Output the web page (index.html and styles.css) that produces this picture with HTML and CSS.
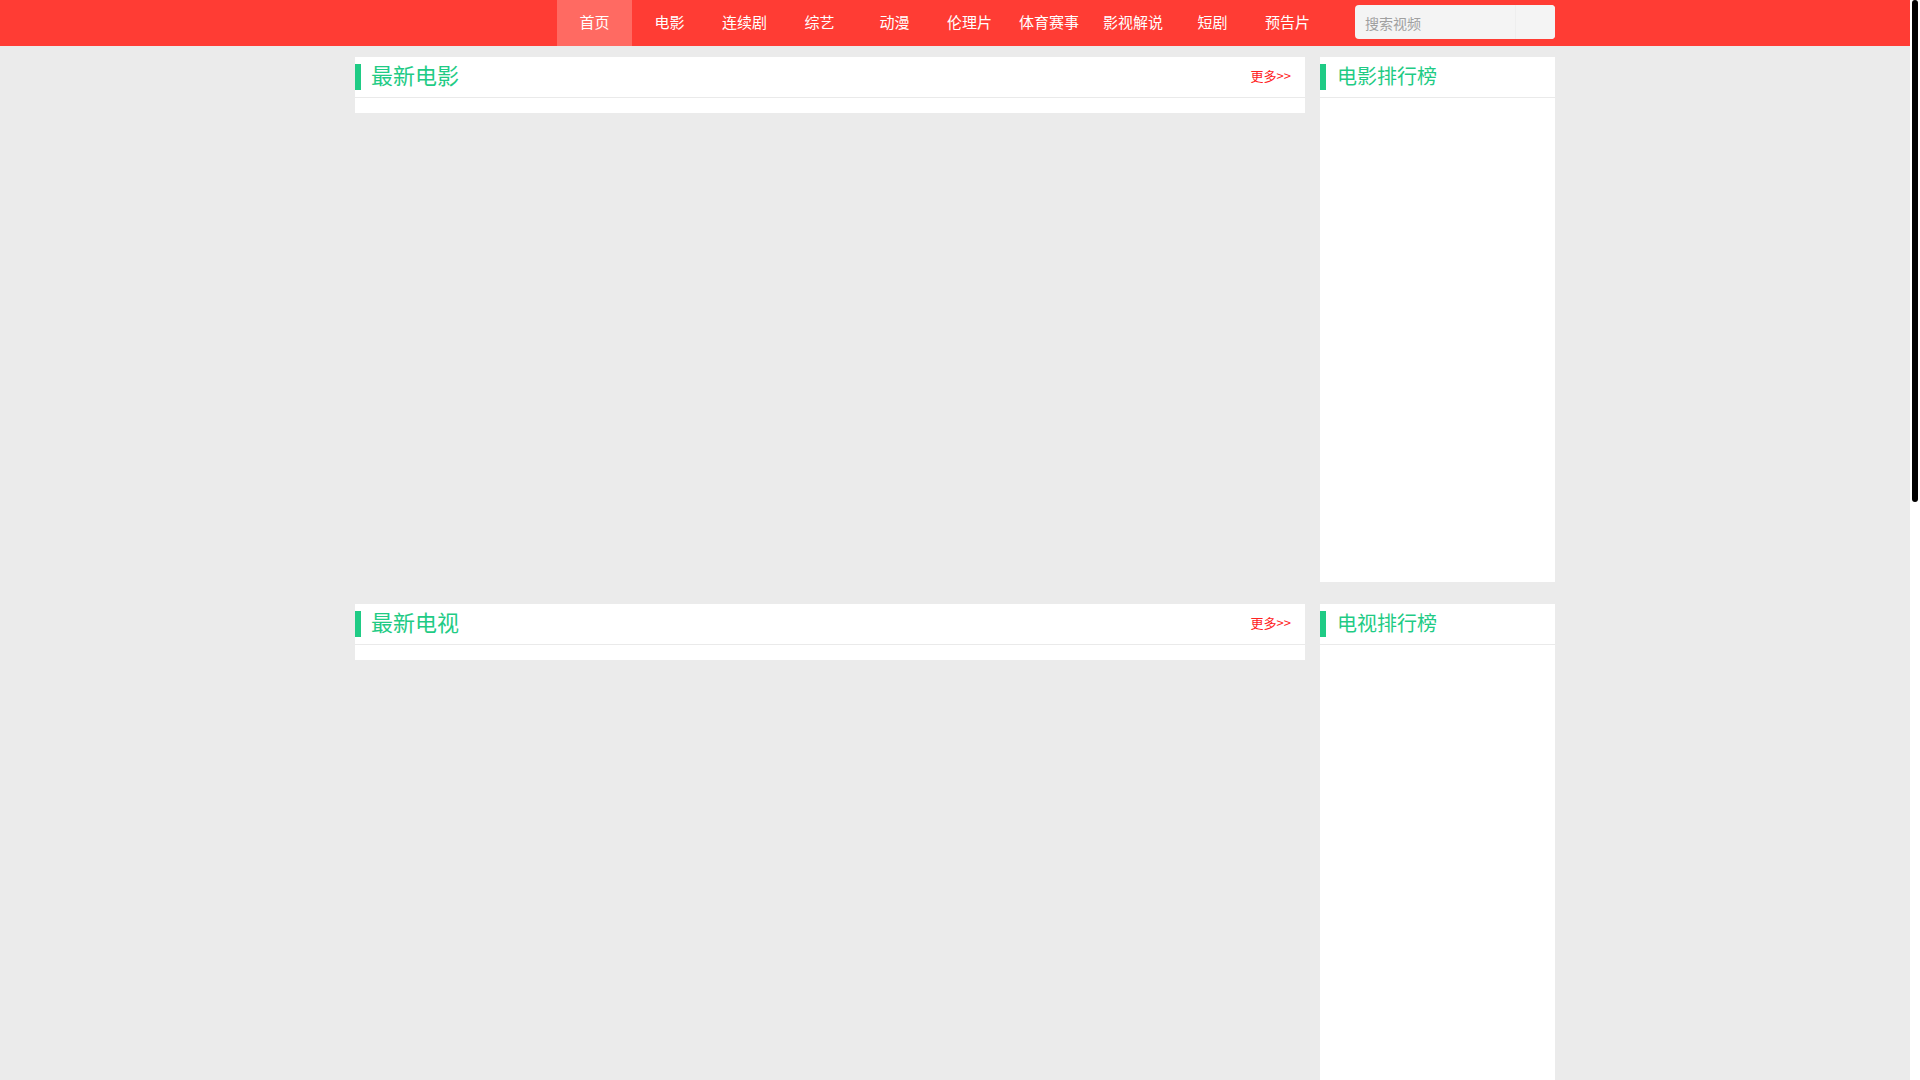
FILE: index.html
```html
<!DOCTYPE html>
<html lang="zh-CN">
<head>
<meta charset="utf-8">
<title>首页</title>
<link rel="stylesheet" href="styles.css">
</head>
<body>
<div class="page">
<header class="topbar">
  <div class="wrap topbar-inner">
    <div class="logo"></div>
    <ul class="nav">
      <li class="nav-item active">首页</li>
      <li class="nav-item">电影</li>
      <li class="nav-item">连续剧</li>
      <li class="nav-item">综艺</li>
      <li class="nav-item">动漫</li>
      <li class="nav-item">伦理片</li>
      <li class="nav-item">体育赛事</li>
      <li class="nav-item">影视解说</li>
      <li class="nav-item">短剧</li>
      <li class="nav-item">预告片</li>
    </ul>
    <form class="search">
      <input class="search-input" type="text" placeholder="搜索视频">
      <button class="search-btn" type="button"></button>
    </form>
  </div>
</header>

<main class="wrap content">
  <section class="row">
    <div class="main-box">
      <div class="box-head">
        <h2 class="box-title big">最新电影</h2>
        <a class="more">更多&gt;&gt;</a>
      </div>
      <div class="box-body"></div>
    </div>
    <aside class="side-box">
      <div class="box-head">
        <h2 class="box-title">电影排行榜</h2>
      </div>
      <div class="rank-body"></div>
    </aside>
  </section>

  <section class="row">
    <div class="main-box">
      <div class="box-head">
        <h2 class="box-title big">最新电视</h2>
        <a class="more">更多&gt;&gt;</a>
      </div>
      <div class="box-body"></div>
    </div>
    <aside class="side-box">
      <div class="box-head">
        <h2 class="box-title">电视排行榜</h2>
      </div>
      <div class="rank-body"></div>
    </aside>
  </section>
</main>
</div>
<div class="scroll-track"><div class="scroll-thumb"></div></div>
</body>
</html>
```

FILE: styles.css
```css
* {
  box-sizing: border-box;
}

body {
  margin: 0;
  height: 100vh;
  overflow: hidden;
  display: flex;
  background: #ebebeb;
  font-family: "Noto Sans CJK SC", "Noto Sans", "Liberation Sans", sans-serif;
  color: #333;
}

.page {
  flex: 1;
  min-width: 0;
  height: 100vh;
  overflow: hidden;
}

.scroll-track {
  flex: none;
  width: 10px;
  height: 100vh;
  background: #ffffff;
  padding: 0 2px;
}

.scroll-thumb {
  width: 6px;
  height: 502px;
  background: #000000;
  border-radius: 3px;
}

.wrap {
  width: 1200px;
  margin: 0 auto;
}

.topbar {
  height: 46px;
  background: #ff3c34;
}

.topbar-inner {
  display: flex;
  height: 46px;
}

.logo {
  width: 202px;
  flex: none;
}

.nav {
  display: flex;
  margin: 0;
  padding: 0;
  list-style: none;
}

.nav-item {
  min-width: 75px;
  padding: 0 12px 2px;
  height: 46px;
  line-height: 44px;
  text-align: center;
  font-size: 15px;
  color: #ffffff;
  white-space: nowrap;
}

.nav-item.active {
  background: #ff6a62;
}

.search {
  margin: 5px 0 0 auto;
  width: 200px;
  height: 34px;
  display: flex;
  background: #f4f4f4;
  border-radius: 4px;
  overflow: hidden;
}

.search-input {
  flex: 1;
  min-width: 0;
  border: 0;
  outline: 0;
  background: transparent;
  padding: 1px 0 0 10px;
  font-family: inherit;
  font-size: 14px;
  color: #333;
}

.search-input::placeholder {
  color: #a0a0a0;
}

.search-btn {
  width: 40px;
  border: 0;
  border-left: 1px solid #eeeeee;
  background: #f4f4f4;
  padding: 0;
}

.content {
  padding-top: 11px;
}

.row {
  display: flex;
  justify-content: space-between;
  align-items: flex-start;
  margin-bottom: 22px;
}

.main-box {
  width: 950px;
  background: #ffffff;
  padding-bottom: 15px;
}

.side-box {
  width: 235px;
  background: #ffffff;
}

.box-head {
  height: 41px;
  display: flex;
  align-items: center;
  justify-content: space-between;
  border-bottom: 1px solid #eaeaea;
  padding-right: 14px;
}

.box-title {
  margin: 0;
  height: 26px;
  line-height: 23px;
  border-left: 6px solid #1fcb85;
  padding-left: 11px;
  font-size: 20px;
  font-weight: normal;
  color: #1fcb85;
}

.box-title.big {
  padding-left: 10px;
  font-size: 22px;
  line-height: 20px;
}

.more {
  font-size: 13px;
  line-height: 16px;
  margin-bottom: 3px;
  color: #ff2222;
  text-decoration: none;
  cursor: pointer;
}

.rank-body {
  height: 484px;
}
```
